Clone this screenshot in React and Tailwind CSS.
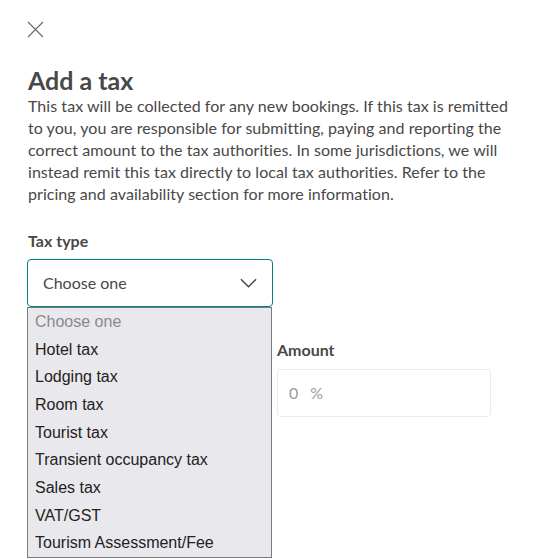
import React from 'react'

const options = [
    'Hotel tax',
    'Lodging tax',
    'Room tax',
    'Tourist tax',
    'Transient occupancy tax',
    'Sales tax',
    'VAT/GST',
    'Tourism Assessment/Fee',
]

// Add-a-tax modal with the tax type select opened
export default function App() {
    return (
        <div className="relative w-[543px] h-[559px] overflow-hidden bg-white pl-[28px] pr-[30px] text-[#484848] font-['Lato',sans-serif]">
            {/* Close */}
            <button className="mt-[21px] -ml-[1px] block w-[17px] h-[17px] text-[#6b6b6b]">
                <svg viewBox="0 0 17 17" className="w-[17px] h-[17px]" fill="none" stroke="currentColor" strokeWidth={1.2}>
                    <path d="M1 1l15 15M16 1L1 16" />
                </svg>
            </button>

            {/* Header */}
            <h1 className="mt-[27px] text-[25px] leading-[30px] font-bold">Add a tax</h1>
            <p className="text-[16px] leading-[22px] tracking-[0.05px]">
                This tax will be collected for any new bookings. If this tax is remitted to you, you are responsible for submitting, paying and reporting the correct amount to the tax authorities. In some jurisdictions, we will instead remit this tax directly to local tax authorities. Refer to the pricing and availability section for more information.
            </p>

            {/* Tax type */}
            <label className="mt-[25px] block text-[16px] leading-[22px] font-bold">Tax type</label>
            <div className="mt-[7px] -ml-[1px] w-[246px] h-[48px] border border-[#008489] rounded-[4px] flex items-center justify-between pl-[15px] pr-[15px]">
                <span className="text-[16px]">Choose one</span>
                <svg viewBox="0 0 18 10" className="w-[17px] h-[10px]" fill="none" stroke="#484848" strokeWidth={1.6}>
                    <path d="M1 1l8 8 8-8" />
                </svg>
            </div>

            {/* Details row (partly under the open list) */}
            <div className="mt-[32px] -ml-[1px] grid grid-cols-[245px_214px] gap-x-[5px]">
                <div className="pt-[30px]">
                    <div className="h-[48px] border border-[#ebebeb] rounded-[4px]" />
                </div>
                <div>
                    <div className="text-[16px] leading-[22px] font-bold">Amount</div>
                    <div className="mt-[8px] h-[48px] border border-[#ebebeb] rounded-[4px] flex items-center pl-[11px] gap-[12px] text-[16px] text-[#9a9a9a]">
                        <span>0</span>
                        <span>%</span>
                    </div>
                </div>
                <div className="pt-[86px]">
                    <div className="h-[60px] border border-[#ebebeb] rounded-[4px]" />
                </div>
            </div>

            {/* Open select list */}
            <ul className="absolute left-[27px] top-[307px] w-[245px] h-[251px] bg-[#e9e8ed] border border-[#7a7a7a] font-['Liberation_Sans',Arial,sans-serif] text-[16px] text-[#222]">
                <li className="h-[27.7px] flex items-center pl-[7px] text-[#8a8a8a]">Choose one</li>
                {options.map((o) => (
                    <li key={o} className="h-[27.7px] flex items-center pl-[7px]">{o}</li>
                ))}
            </ul>
        </div>
    )
}
